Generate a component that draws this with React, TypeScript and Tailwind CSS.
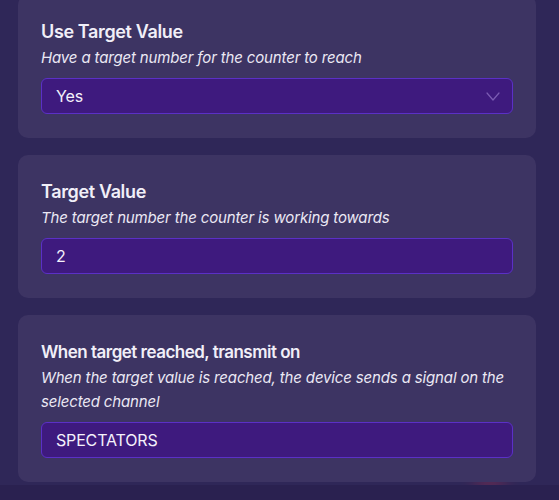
import React from 'react';

type Field = {
  title: string;
  description: string;
  value: string;
  select?: boolean;
  titleSize: string;
};

const fields: Field[] = [
  {
    title: 'Use Target Value',
    description: 'Have a target number for the counter to reach',
    value: 'Yes',
    select: true,
    titleSize: 'text-[18px] tracking-[-0.02em]',
  },
  {
    title: 'Target Value',
    description: 'The target number the counter is working towards',
    value: '2',
    titleSize: 'text-[18px] tracking-[-0.02em]',
  },
  {
    title: 'When target reached, transmit on',
    description: 'When the target value is reached, the device sends a signal on the selected channel',
    value: 'SPECTATORS',
    titleSize: 'text-[17px] tracking-[-0.03em]',
  },
];

const Chevron: React.FC = () => (
  <svg width="14" height="9" viewBox="0 0 14 9" fill="none" className="shrink-0">
    <path d="M1 1l6 7 6-7" stroke="#7b5cb3" strokeWidth="1.2" strokeLinecap="round" strokeLinejoin="round" />
  </svg>
);

const SettingCard: React.FC<{ field: Field; first?: boolean }> = ({ field, first }) => (
  <div className={`bg-[#3d3463] rounded-[10px] px-[23px] pt-[24px] pb-[24px] ${first ? '-mt-[5px]' : ''}`}>
    <h3 className={`${field.titleSize} leading-[24px] font-semibold text-[#f1eff8] pt-[1px]`}>
      {field.title}
    </h3>
    <p className="text-[15px] tracking-[-0.01em] leading-[24px] italic text-[#ebe8f4] mt-[2px]">
      {field.description}
    </p>
    <div className="mt-[8px] h-[36px] rounded-[6px] bg-[#3e1a7e] border border-[#5b30c6] flex items-center justify-between pl-[14px] pr-[12px]">
      <span className="text-[16px] tracking-[-0.01em] text-[#f4f1fb]">{field.value}</span>
      {field.select && <Chevron />}
    </div>
  </div>
);

const App: React.FC = () => {
  return (
    <div
      className="relative w-[559px] h-[500px] overflow-hidden bg-[#2f2758]"
      style={{ fontFamily: 'Inter, "Noto Sans", sans-serif' }}
    >
      {/* faint red glows behind the panels */}
      <div className="absolute left-[470px] top-[398px] w-[40px] h-[30px] rounded-full bg-[#c0304a] opacity-25 blur-[8px]" />
      <div className="absolute left-[475px] top-[465px] w-[30px] h-[40px] rounded-full bg-[#c0304a] opacity-25 blur-[8px]" />
      <div className="absolute left-0 bottom-0 w-full h-[15px] bg-[#2a2150]" />

      <div className="relative flex flex-col gap-[17px] pl-[18px] pr-[23px]">
        {fields.map((f, i) => (
          <SettingCard key={f.title} field={f} first={i === 0} />
        ))}
      </div>
    </div>
  );
};

export default App;
